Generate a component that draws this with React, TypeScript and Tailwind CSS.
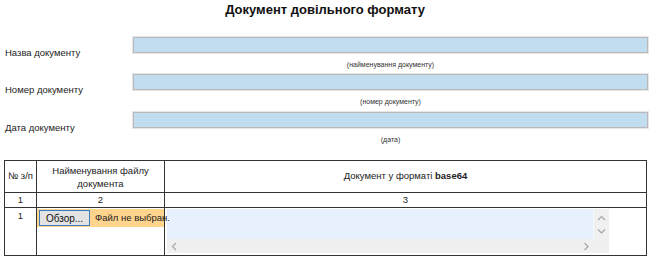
import React from "react";

const rows = [
  { label: "Назва документу", caption: "(найменування документу)" },
  { label: "Номер документу", caption: "(номер документу)" },
  { label: "Дата документу", caption: "(дата)" },
];

function Chevron({ dir }: { dir: "up" | "down" | "left" | "right" }) {
  const d =
    dir === "up"
      ? "M1 5 L4.5 1.5 L8 5"
      : dir === "down"
      ? "M1 1.5 L4.5 5 L8 1.5"
      : dir === "left"
      ? "M5 1 L1.5 4.5 L5 8"
      : "M1.5 1 L5 4.5 L1.5 8";
  const w = dir === "up" || dir === "down" ? 9 : 7;
  const h = dir === "up" || dir === "down" ? 7 : 9;
  return (
    <svg width={w} height={h} viewBox={`0 0 ${w} ${h}`} fill="none">
      <path d={d} stroke="#a6a6a6" strokeWidth="1.2" />
    </svg>
  );
}

export default function App() {
  return (
    <div className="w-[650px] h-[259px] bg-white overflow-hidden text-black font-['Liberation_Sans',Arial,sans-serif]">
      <h1 className="text-center font-bold text-[13px] leading-[18px] pt-[1px] text-[#111]">
        Документ довільного формату
      </h1>
      <div className="mt-[18px] flex flex-col">
        {rows.map((r, i) => (
          <div
            key={r.label}
            className={
              "flex " + (i === 1 ? "mt-[5px]" : i === 2 ? "mt-[6px]" : "")
            }
          >
            <div className="w-[133px] pl-[5px] flex items-center text-[9.5px] text-[#222]">
              {r.label}
            </div>
            <div className="w-[515px] flex flex-col">
              <div className="h-[16px] bg-[#c1ddef] border border-[#b9b9b9] shadow-[0_0_0_1px_#e6e6e6]" />
              <div className="mt-[8px] h-[8px] text-center text-[7px] leading-[8px] text-[#333]">
                {r.caption}
              </div>
            </div>
          </div>
        ))}
      </div>

      <div className="mt-[16px] ml-[4px] w-[643px] grid grid-cols-[32px_128px_1fr] grid-rows-[32px_15px_48px] border-l border-t border-[#333] text-[9.5px] text-[#222]">
        <div className="border-r border-b border-[#333] flex items-center justify-center">
          № з/п
        </div>
        <div className="border-r border-b border-[#333] flex items-center justify-center text-center leading-[13px]">
          Найменування файлу
          <br />
          документа
        </div>
        <div className="border-r border-b border-[#333] flex items-center justify-center">
          <span>
            Документ у форматі <b>base64</b>
          </span>
        </div>

        <div className="border-r border-b border-[#333] flex items-center justify-center leading-[14px]">
          1
        </div>
        <div className="border-r border-b border-[#333] flex items-center justify-center leading-[14px]">
          2
        </div>
        <div className="border-r border-b border-[#333] flex items-center justify-center leading-[14px]">
          3
        </div>

        <div className="border-r border-b border-[#333] flex justify-center pt-[2px] leading-[12px]">
          1
        </div>
        <div className="border-r border-b border-[#333] pt-[1px] relative z-10">
          <div className="h-[18px] bg-[#ffd48c] flex items-center pl-[2px] whitespace-nowrap">
            <div className="shrink-0 h-[16px] w-[51px] bg-[#e3e3e3] border border-[#3a7dc0] flex items-center justify-center text-[10px] text-[#111]">
              Обзор...
            </div>
            <span className="shrink-0 ml-[5px] text-[#222]">Файл не выбран.</span>
          </div>
        </div>
        <div className="border-r border-b border-[#333] pt-[1px] pl-[2px]">
          <div className="w-[442px] h-[44px] grid grid-cols-[1fr_15px] grid-rows-[1fr_14px]">
            <div className="bg-[#e7f1fd] border-r border-[#f6f9fd]" />
            <div className="row-span-2 bg-[#f0f0f0] flex flex-col items-center pt-[6px] gap-[6px]">
              <Chevron dir="up" />
              <Chevron dir="down" />
            </div>
            <div className="bg-[#f0f0f0] flex items-center justify-between px-[4px]">
              <Chevron dir="left" />
              <Chevron dir="right" />
            </div>
          </div>
        </div>
      </div>
    </div>
  );
}
